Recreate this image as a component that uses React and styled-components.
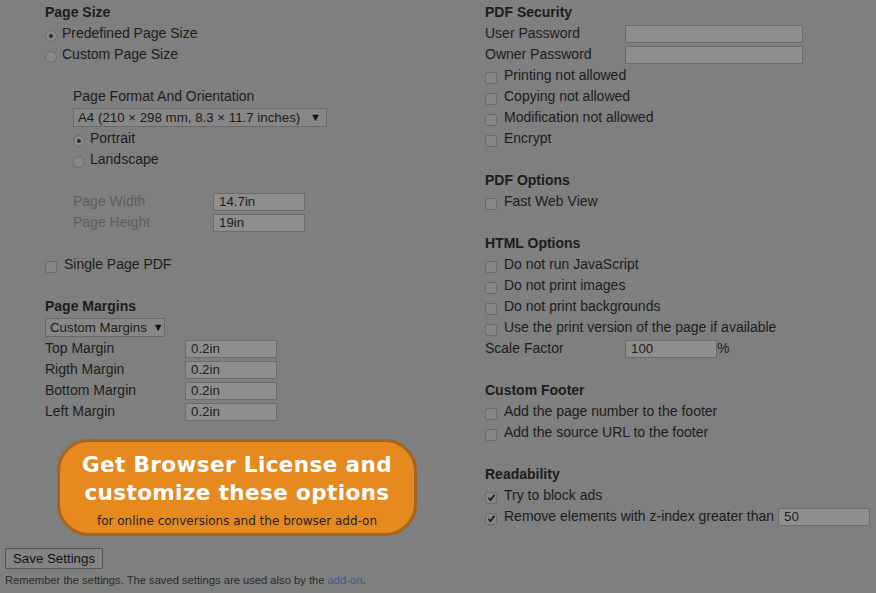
import React from 'react'
import styled, { createGlobalStyle } from 'styled-components'

const GlobalStyle = createGlobalStyle`
  html, body {
    margin: 0;
    padding: 0;
    background: #7f7f7f;
  }
  body {
    font-family: "Liberation Sans", Arial, sans-serif;
    font-size: 14px;
    color: #1c1c1c;
  }
`

export default function App() {
  return (
    <>
      <GlobalStyle />
      <Page>
        <Columns>
          <Column>
            <Section>
              <Heading>Page Size</Heading>
              <Radio checked label="Predefined Page Size" />
              <Radio label="Custom Page Size" />
            </Section>

            <Indent>
              <Section>
                <Row>Page Format And Orientation</Row>
                <Row>
                  <Select wide>
                    A4 (210 × 298 mm, 8.3 × 11.7 inches)
                    <Arrow>▼</Arrow>
                  </Select>
                </Row>
                <Radio checked label="Portrait" />
                <Radio label="Landscape" />
              </Section>
              <Section>
                <Field label="Page Width" value="14.7in" muted />
                <Field label="Page Height" value="19in" muted />
              </Section>
            </Indent>

            <Section>
              <Checkbox label="Single Page PDF" />
            </Section>

            <section>
              <Heading>Page Margins</Heading>
              <Row>
                <Select>
                  Custom Margins
                  <Arrow>▼</Arrow>
                </Select>
              </Row>
              <Field label="Top Margin" value="0.2in" />
              <Field label="Rigth Margin" value="0.2in" />
              <Field label="Bottom Margin" value="0.2in" />
              <Field label="Left Margin" value="0.2in" />
            </section>

            <Banner>
              <BannerTitle>
                Get Browser License and
                <br />
                customize these options
              </BannerTitle>
              <BannerNote>for online conversions and the browser add-on</BannerNote>
            </Banner>
          </Column>

          <Column>
            <Section>
              <Heading>PDF Security</Heading>
              <Field label="User Password" value="" size="178px" />
              <Field label="Owner Password" value="" size="178px" />
              <Checkbox label="Printing not allowed" />
              <Checkbox label="Copying not allowed" />
              <Checkbox label="Modification not allowed" />
              <Checkbox label="Encrypt" />
            </Section>

            <Section>
              <Heading>PDF Options</Heading>
              <Checkbox label="Fast Web View" />
            </Section>

            <Section>
              <Heading>HTML Options</Heading>
              <Checkbox label="Do not run JavaScript" />
              <Checkbox label="Do not print images" />
              <Checkbox label="Do not print backgrounds" />
              <Checkbox label="Use the print version of the page if available" />
              <Field label="Scale Factor" value="100" suffix="%" />
            </Section>

            <Section>
              <Heading>Custom Footer</Heading>
              <Checkbox label="Add the page number to the footer" />
              <Checkbox label="Add the source URL to the footer" />
            </Section>

            <section>
              <Heading>Readability</Heading>
              <Checkbox checked label="Try to block ads" />
              <Checkbox checked label="Remove elements with z-index greater than">
                <Input value="50" readOnly />
              </Checkbox>
            </section>
          </Column>
        </Columns>

        <SaveButton>Save Settings</SaveButton>
        <Note>
          Remember the settings. The saved settings are used also by the <Link href="#">add-on</Link>.
        </Note>
      </Page>
    </>
  )
}

const Radio = ({ checked, label }) => (
  <Row>
    <RadioDot checked={checked} />
    {label}
  </Row>
)

const Checkbox = ({ checked, label, children }) => (
  <Row>
    <Box>
      {checked && (
        <svg width="9" height="9" viewBox="0 0 9 9">
          <path d="M1.5 4.8 L3.6 7 L7.6 1.8" fill="none" stroke="#1e1e1e" strokeWidth="1.8" />
        </svg>
      )}
    </Box>
    {label}
    {children && <Spacer>{children}</Spacer>}
  </Row>
)

const Field = ({ label, value, muted, size, suffix }) => (
  <Row>
    <Label muted={muted}>{label}</Label>
    <Input value={value} readOnly style={size ? { width: size } : undefined} />
    {suffix}
  </Row>
)

const Page = styled.div`
  padding: 2px 5px 0;
`

const Columns = styled.div`
  display: grid;
  grid-template-columns: 440px 1fr;
  padding-left: 40px;
`

const Column = styled.div`
  display: flex;
  flex-direction: column;
`

const Section = styled.section`
  margin-bottom: 21px;
`

const Indent = styled.div`
  padding-left: 28px;
`

const Heading = styled.h3`
  margin: 0;
  font-size: 14px;
  font-weight: bold;
  line-height: 21px;
  color: #1c1c1c;
`

const Row = styled.div`
  display: flex;
  align-items: center;
  height: 21px;
  line-height: 21px;
  white-space: nowrap;
`

const Label = styled.span`
  width: 140px;
  flex: none;
  color: ${p => (p.muted ? '#5e5e5e' : '#1c1c1c')};
`

const Input = styled.input`
  box-sizing: border-box;
  width: 92px;
  height: 18px;
  margin: 0;
  padding: 0 5px;
  border: 1px solid #6c6c6c;
  background: #8e8e8e;
  font-family: "Liberation Sans", Arial, sans-serif;
  font-size: 13.3px;
  color: #1c1c1c;
  outline: none;
`

const Spacer = styled.span`
  margin-left: 4px;
  display: flex;
`

const Select = styled.div`
  box-sizing: border-box;
  display: flex;
  align-items: center;
  justify-content: space-between;
  width: ${p => (p.wide ? '254px' : '120px')};
  height: 19px;
  padding: 0 5px 0 4px;
  border: 1px solid #6a6a6a;
  background: #878787;
  font-size: 13.3px;
  color: #1a1a1a;
`

const Arrow = styled.span`
  font-size: 11px;
  margin-left: 6px;
  color: #111;
`

const RadioDot = styled.span`
  box-sizing: border-box;
  flex: none;
  width: 12px;
  height: 12px;
  margin: 4px 5px 0 0;
  border: 1px solid #6e6e6e;
  border-radius: 50%;
  background: #888;
  display: flex;
  align-items: center;
  justify-content: center;
  &::after {
    content: '';
    width: 4px;
    height: 4px;
    border-radius: 50%;
    background: ${p => (p.checked ? '#2a2a2a' : 'transparent')};
  }
`

const Box = styled.span`
  box-sizing: border-box;
  flex: none;
  width: 12px;
  height: 12px;
  margin: 4px 7px 0 0;
  border: 1px solid #6b6b6b;
  border-radius: 2px;
  background: #868686;
  display: flex;
  align-items: center;
  justify-content: center;
`

const Banner = styled.div`
  box-sizing: border-box;
  width: 360px;
  height: 97px;
  margin: 17px 0 0 12px;
  padding-top: 9px;
  border: 3px solid #a4651f;
  border-radius: 32px;
  background: #e68a1f;
  text-align: center;
  font-family: "DejaVu Sans", Verdana, sans-serif;
`

const BannerTitle = styled.div`
  font-size: 21.5px;
  font-weight: bold;
  line-height: 28px;
  letter-spacing: 0.4px;
  color: #fff;
`

const BannerNote = styled.div`
  margin-top: 5px;
  font-size: 12px;
  line-height: 18px;
  color: #1e1e1e;
`

const SaveButton = styled.button`
  display: block;
  height: 21px;
  margin: 12px 0 0;
  padding: 0 7px;
  border: 1px solid #555;
  border-radius: 1px;
  background: #838383;
  font-family: "Liberation Sans", Arial, sans-serif;
  font-size: 13.3px;
  color: #111;
`

const Note = styled.p`
  margin: 3px 0 0;
  font-size: 11.2px;
  line-height: 16px;
  color: #2a2a2a;
`

const Link = styled.a`
  color: #3d5c8c;
  text-decoration: none;
`
